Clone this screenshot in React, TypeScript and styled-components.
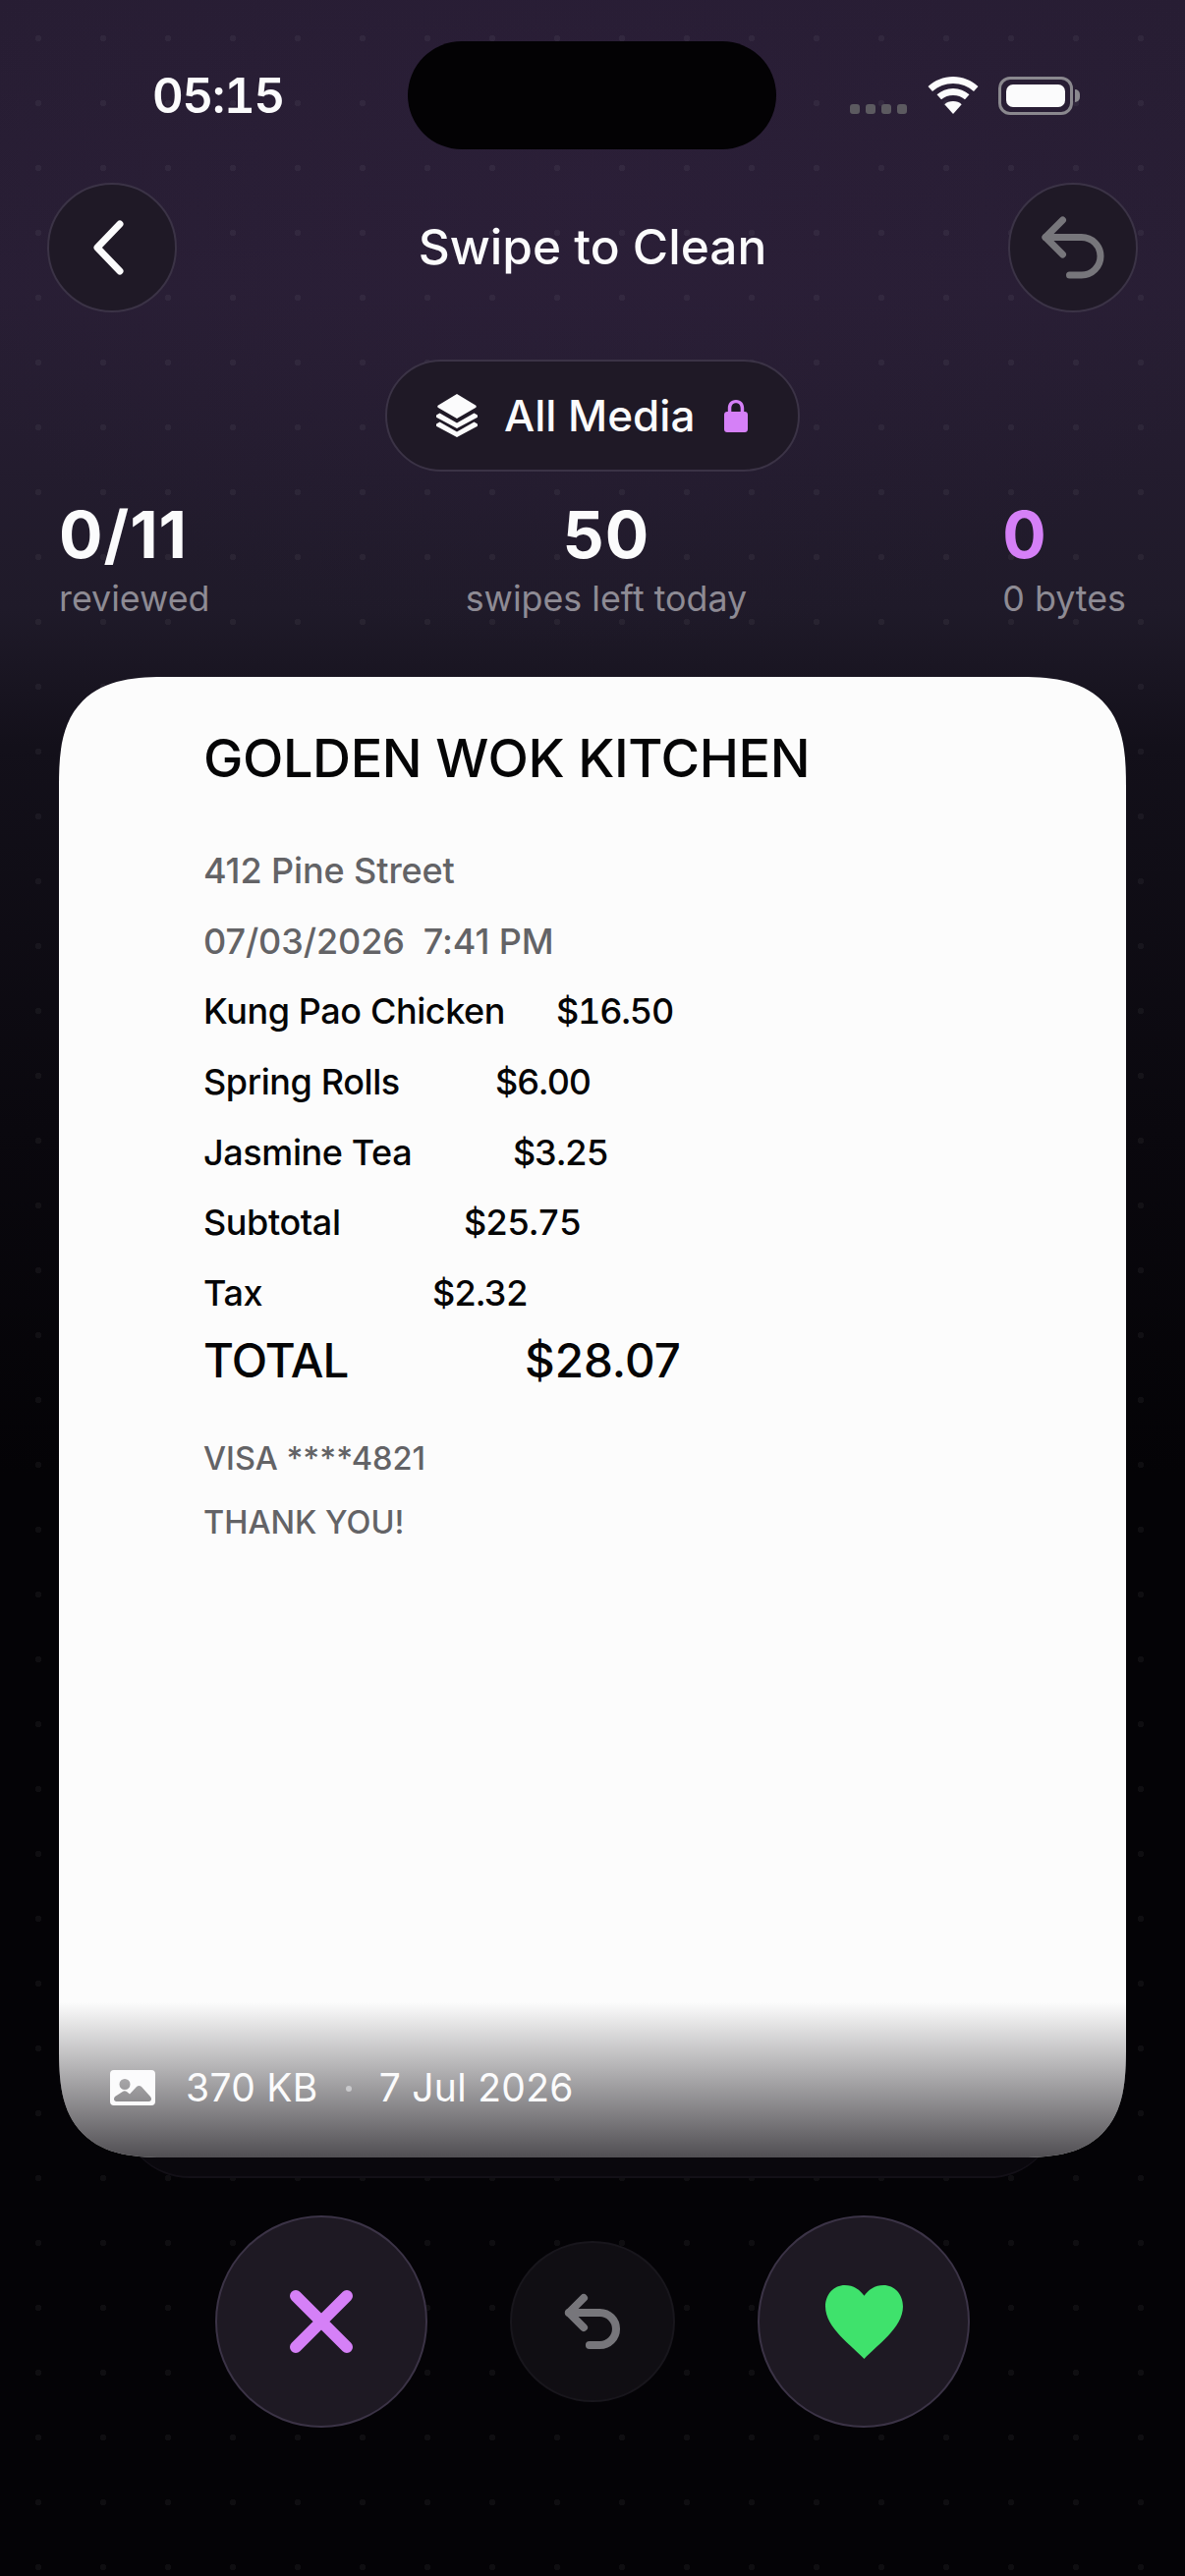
import React from "react";
import styled, { createGlobalStyle } from "styled-components";
import { Undo2 } from "lucide-react";

const Global = createGlobalStyle`
  html, body { margin: 0; padding: 0; background: #040306; }
  * { box-sizing: border-box; }
  body { font-family: Inter, "Noto Sans", sans-serif; -webkit-font-smoothing: antialiased; }
`;

const Page = styled.div`
  position: relative;
  width: 1206px;
  height: 2622px;
  overflow: hidden;
  padding-top: 42px;
  color: #fbfbfc;
  background:
    radial-gradient(circle at 6px 6px, rgba(255, 255, 255, 0.045) 0 3px, transparent 3.5px) 33px 33px / 66px 66px,
    radial-gradient(ellipse 700px 460px at 50% 200px, rgba(48, 32, 62, 0.35), transparent 100%),
    linear-gradient(180deg, #271d33 0, #281e34 300px, #1f1a29 620px, #13101a 760px, #0a080e 1150px, #040306 1500px, #040306 100%);
`;

const StatusBar = styled.div`
  display: grid;
  grid-template-columns: 415px 375px 1fr;
  height: 110px;
`;

const Time = styled.div`
  padding-left: 155px;
  padding-top: 28px;
  font-size: 49px;
  line-height: 56px;
  font-weight: 600;
  letter-spacing: -1.2px;
  font-variant-numeric: tabular-nums;
`;

const Island = styled.div`
  background: #030204;
  border-radius: 55px;
`;

const StatusIcons = styled.div`
  display: flex;
  align-items: flex-start;
  padding: 36px 0 0 75px;
`;

const SignalDots = styled.div`
  display: flex;
  gap: 6px;
  margin-top: 28px;
  margin-right: 21px;
`;

const SignalDot = styled.span`
  width: 10px;
  height: 10px;
  border-radius: 3px;
  background: #5c5a60;
`;

const BatteryShell = styled.div`
  position: relative;
  width: 76px;
  height: 39px;
  margin-left: 20px;
  padding: 5px;
  border: 3px solid #8a888e;
  border-radius: 12px;
`;

const BatteryFill = styled.div`
  width: 100%;
  height: 100%;
  background: #fbfbfc;
  border-radius: 7px;
`;

const BatteryCap = styled.div`
  position: absolute;
  right: -10px;
  top: 10px;
  width: 5px;
  height: 13px;
  background: #8a888e;
  border-radius: 0 5px 5px 0;
`;

const Header = styled.header`
  display: flex;
  align-items: center;
  justify-content: space-between;
  height: 132px;
  margin-top: 34px;
  padding: 0 48px;
`;

const RoundButton = styled.button<{ $muted?: boolean }>`
  display: flex;
  align-items: center;
  justify-content: center;
  width: 132px;
  height: 132px;
  padding: 0;
  border-radius: 50%;
  border: 2.5px solid #3b3346;
  background: #1f1926;
  color: ${(p) => (p.$muted ? "#77767b" : "#fbfbfc")};
`;

const Title = styled.h1`
  margin: -2px 0 0;
  font-size: 49.6px;
  line-height: 60px;
  font-weight: 500;
`;

const PillRow = styled.div`
  display: flex;
  justify-content: center;
  margin-top: 48px;
`;

const Pill = styled.div`
  display: flex;
  align-items: center;
  width: 422px;
  height: 114px;
  padding-left: 50px;
  border-radius: 57px;
  border: 2.5px solid #3b3346;
  background: #1f1926;
`;

const PillLabel = styled.span`
  margin-left: 27px;
  margin-right: 30px;
  font-size: 44px;
  line-height: 54px;
  font-weight: 500;
`;

const Stats = styled.section`
  display: flex;
  justify-content: space-between;
  margin-top: 28px;
  padding: 0 60px;
`;

const Stat = styled.div<{ $center?: boolean }>`
  display: flex;
  flex-direction: column;
  align-items: ${(p) => (p.$center ? "center" : "flex-start")};
`;

const StatValue = styled.div<{ $accent?: boolean }>`
  font-size: 66px;
  line-height: 72px;
  font-weight: 700;
  letter-spacing: 1px;
  color: ${(p) => (p.$accent ? "#d580f7" : "#fbfbfc")};
`;

const StatLabel = styled.div`
  margin-top: 7px;
  font-size: 35.8px;
  line-height: 44px;
  color: #8e8b94;
`;

const CardStack = styled.div`
  position: relative;
  height: 1507px;
  margin: 58px 60px 0;
`;

const BackCard = styled.div`
  position: absolute;
  left: 63px;
  right: 69px;
  bottom: -21px;
  height: 120px;
  border-radius: 0 0 70px 70px;
  background: #0a080d;
  border-bottom: 2px solid #131017;
`;

const Card = styled.article`
  position: relative;
  height: 100%;
  overflow: hidden;
  padding: 48px 0 0 147px;
  border-radius: 84px;
  background: #fcfcfc;
  color: #050506;

  @supports (corner-shape: squircle) {
    border-radius: 112px;
    corner-shape: superellipse(1.5);
  }
`;

const Shop = styled.h2`
  margin: 0 0 44px;
  font-size: 54px;
  line-height: 70px;
  font-weight: 500;
  letter-spacing: -0.4px;
`;

const MutedLine = styled.div`
  height: 71.7px;
  font-size: 36px;
  line-height: 71.7px;
  font-weight: 500;
  letter-spacing: -0.1px;
  white-space: pre;
  color: #636366;
`;

const ItemLine = styled.div`
  display: flex;
  height: 71.7px;
  font-size: 36px;
  line-height: 71.7px;
  font-weight: 500;
  letter-spacing: -0.4px;
`;

const ItemName = styled.span<{ $width: number }>`
  width: ${(p) => p.$width}px;
`;

const ItemPrice = styled.span`
  font-variant-numeric: tabular-nums;
  letter-spacing: -1.2px;
`;

const TotalLine = styled.div`
  display: flex;
  height: 64px;
  margin-bottom: 35px;
  font-size: 47.5px;
  line-height: 64px;
  font-weight: 500;
`;

const TotalLabel = styled.span`
  width: 327px;
  letter-spacing: -0.9px;
`;

const FootLine = styled.div`
  height: 65px;
  font-size: 32.5px;
  line-height: 65px;
  font-weight: 500;
  color: #636366;
`;

const Scrim = styled.div`
  position: absolute;
  left: 0;
  right: 0;
  bottom: 0;
  height: 158px;
  background: linear-gradient(180deg, rgba(15, 12, 18, 0), rgba(15, 12, 18, 0.72));
`;

const Meta = styled.div`
  position: absolute;
  left: 52px;
  bottom: 47px;
  display: flex;
  align-items: center;
  color: #fbfbfc;
  font-size: 39px;
  line-height: 48px;
  letter-spacing: 0.3px;
`;

const MetaSize = styled.span`
  margin-left: 31px;
`;

const MetaDot = styled.span`
  width: 6px;
  height: 6px;
  margin: 2px 28px 0;
  border-radius: 50%;
  background: #c9c9cc;
`;

const Actions = styled.section`
  display: flex;
  align-items: center;
  justify-content: center;
  gap: 84px;
  height: 216px;
  margin-top: 59px;
`;

const ActionButton = styled.button`
  display: flex;
  align-items: center;
  justify-content: center;
  width: 216px;
  height: 216px;
  padding: 0;
  border-radius: 50%;
  border: 2.5px solid #3b3346;
  background: #1e1923;
`;

const UndoButton = styled.button`
  display: flex;
  align-items: center;
  justify-content: center;
  width: 168px;
  height: 164px;
  padding: 0;
  border-radius: 50%;
  border: 2px solid #18161c;
  background: #100e13;
  color: #77767b;
`;

const Icon = styled.svg`
  display: block;
  flex: none;
`;

const items: [string, string, number][] = [
  ["Kung Pao Chicken", "$16.50", 359],
  ["Spring Rolls", "$6.00", 297],
  ["Jasmine Tea", "$3.25", 315],
  ["Subtotal", "$25.75", 265],
  ["Tax", "$2.32", 233],
];

export default function App() {
  return (
    <Page>
      <Global />
      <StatusBar>
        <Time>05:15</Time>
        <Island />
        <StatusIcons>
          <SignalDots>
            <SignalDot />
            <SignalDot />
            <SignalDot />
            <SignalDot />
          </SignalDots>
          <Icon width="52" height="38" viewBox="0 0 52 38" fill="#fbfbfc">
            <path d="M26 0C16 0 7.500 3.700 0.500 10L5 15C11 9.800 18 7 26 7s15 2.800 21 8l4.500-5C44.500 3.700 36 0 26 0z" />
            <path d="M26 12c-6.500 0-12 2.300-16.500 6.300l4.500 5C17.300 20.400 21.400 19 26 19s8.700 1.400 12 4.300l4.500-5C38 14.300 32.500 12 26 12z" />
            <path d="M26 25c-3.500 0-6.500 1.200-8.700 3.200L26 38l8.700-9.800C32.500 26.200 29.500 25 26 25z" />
          </Icon>
          <BatteryShell>
            <BatteryFill />
            <BatteryCap />
          </BatteryShell>
        </StatusIcons>
      </StatusBar>

      <Header>
        <RoundButton>
          <Icon width="60" height="60" viewBox="0 0 60 60" fill="none" stroke="currentColor" strokeWidth="7" strokeLinecap="round" strokeLinejoin="round">
            <path d="M38 6 L15 30 L38 54" />
          </Icon>
        </RoundButton>
        <Title>Swipe to Clean</Title>
        <RoundButton $muted>
          <Undo2 size={84} strokeWidth={2} />
        </RoundButton>
      </Header>

      <PillRow>
        <Pill>
          <Icon width="42" height="44" viewBox="0 0 42 44" fill="#fbfbfc">
            <path d="M21 0 40 11.500a1.500 1.500 0 0 1 0 2.600L21 25 2 14.100a1.500 1.500 0 0 1 0-2.600z" />
            <path d="M3.500 19.500 21 29.500l17.500-10 3 1.800a1.500 1.500 0 0 1 0 2.600L21 35 .5 23.900a1.500 1.500 0 0 1 0-2.600z" />
            <path d="M3.500 28.500 21 38.500l17.500-10 3 1.800a1.500 1.500 0 0 1 0 2.600L21 44 .5 32.900a1.500 1.500 0 0 1 0-2.600z" />
          </Icon>
          <PillLabel>All Media</PillLabel>
          <Icon width="24" height="33" viewBox="0 0 24 33" fill="#d580f7">
            <path d="M12 0C6.500 0 3.800 3.800 3.800 8.500V12H3c-1.700 0-3 1.300-3 3v15c0 1.700 1.300 3 3 3h18c1.700 0 3-1.300 3-3V15c0-1.700-1.300-3-3-3h-.8V8.500C20.200 3.800 17.500 0 12 0zM7.300 12V8.500C7.300 5.400 9 3.200 12 3.200s4.700 2.200 4.700 5.300V12z" />
          </Icon>
        </Pill>
      </PillRow>

      <Stats>
        <Stat>
          <StatValue>0/11</StatValue>
          <StatLabel>reviewed</StatLabel>
        </Stat>
        <Stat $center>
          <StatValue>50</StatValue>
          <StatLabel>swipes left today</StatLabel>
        </Stat>
        <Stat>
          <StatValue $accent>0</StatValue>
          <StatLabel>0 bytes</StatLabel>
        </Stat>
      </Stats>

      <CardStack>
        <BackCard />
        <Card>
          <Shop>GOLDEN WOK KITCHEN</Shop>
          <MutedLine>412 Pine Street</MutedLine>
          <MutedLine>{"07/03/2026  7:41 PM"}</MutedLine>
          {items.map(([name, price, width]) => (
            <ItemLine key={name}>
              <ItemName $width={width}>{name}</ItemName>
              <ItemPrice>{price}</ItemPrice>
            </ItemLine>
          ))}
          <TotalLine>
            <TotalLabel>TOTAL</TotalLabel>
            <span>$28.07</span>
          </TotalLine>
          <FootLine>VISA ****4821</FootLine>
          <FootLine>THANK YOU!</FootLine>
          <Scrim />
          <Meta>
            <Icon width="46" height="36" viewBox="0 0 46 36">
              <path
                fill="#fbfbfc"
                fillRule="evenodd"
                d="M4 0h38a4 4 0 0 1 4 4v28a4 4 0 0 1-4 4H4a4 4 0 0 1-4-4V4a4 4 0 0 1 4-4zM15 9a5.500 5.500 0 1 0 0 11 5.500 5.500 0 0 0 0-11zM4 29.500c0 1.400 1 2.500 2.500 2.500h33c1.500 0 2.500-1.100 2.500-2.500 0-1-.4-1.800-1-2.500L32 17c-1.500-1.500-3.500-1.500-5 0l-7 7.500-3-2.500c-1.300-1-3-1-4.200 0L5 27c-.6.700-1 1.500-1 2.500z"
              />
            </Icon>
            <MetaSize>370 KB</MetaSize>
            <MetaDot />
            <span>7 Jul 2026</span>
          </Meta>
        </Card>
      </CardStack>

      <Actions>
        <ActionButton>
          <Icon width="66" height="66" viewBox="0 0 66 66" fill="none" stroke="#d580f7" strokeWidth="12" strokeLinecap="round">
            <path d="M7 7 59 59M59 7 7 59" />
          </Icon>
        </ActionButton>
        <UndoButton>
          <Undo2 size={72} strokeWidth={2.7} />
        </UndoButton>
        <ActionButton>
          <Icon width="79" height="75" viewBox="0 0 80 76" fill="#3fe26c">
            <path d="M40 76C28 63 0 44 0 22 0 9 9 0 20 0c9 0 16 5 20 11C44 5 51 0 60 0c11 0 20 9 20 22 0 22-28 41-40 54z" />
          </Icon>
        </ActionButton>
      </Actions>
    </Page>
  );
}
